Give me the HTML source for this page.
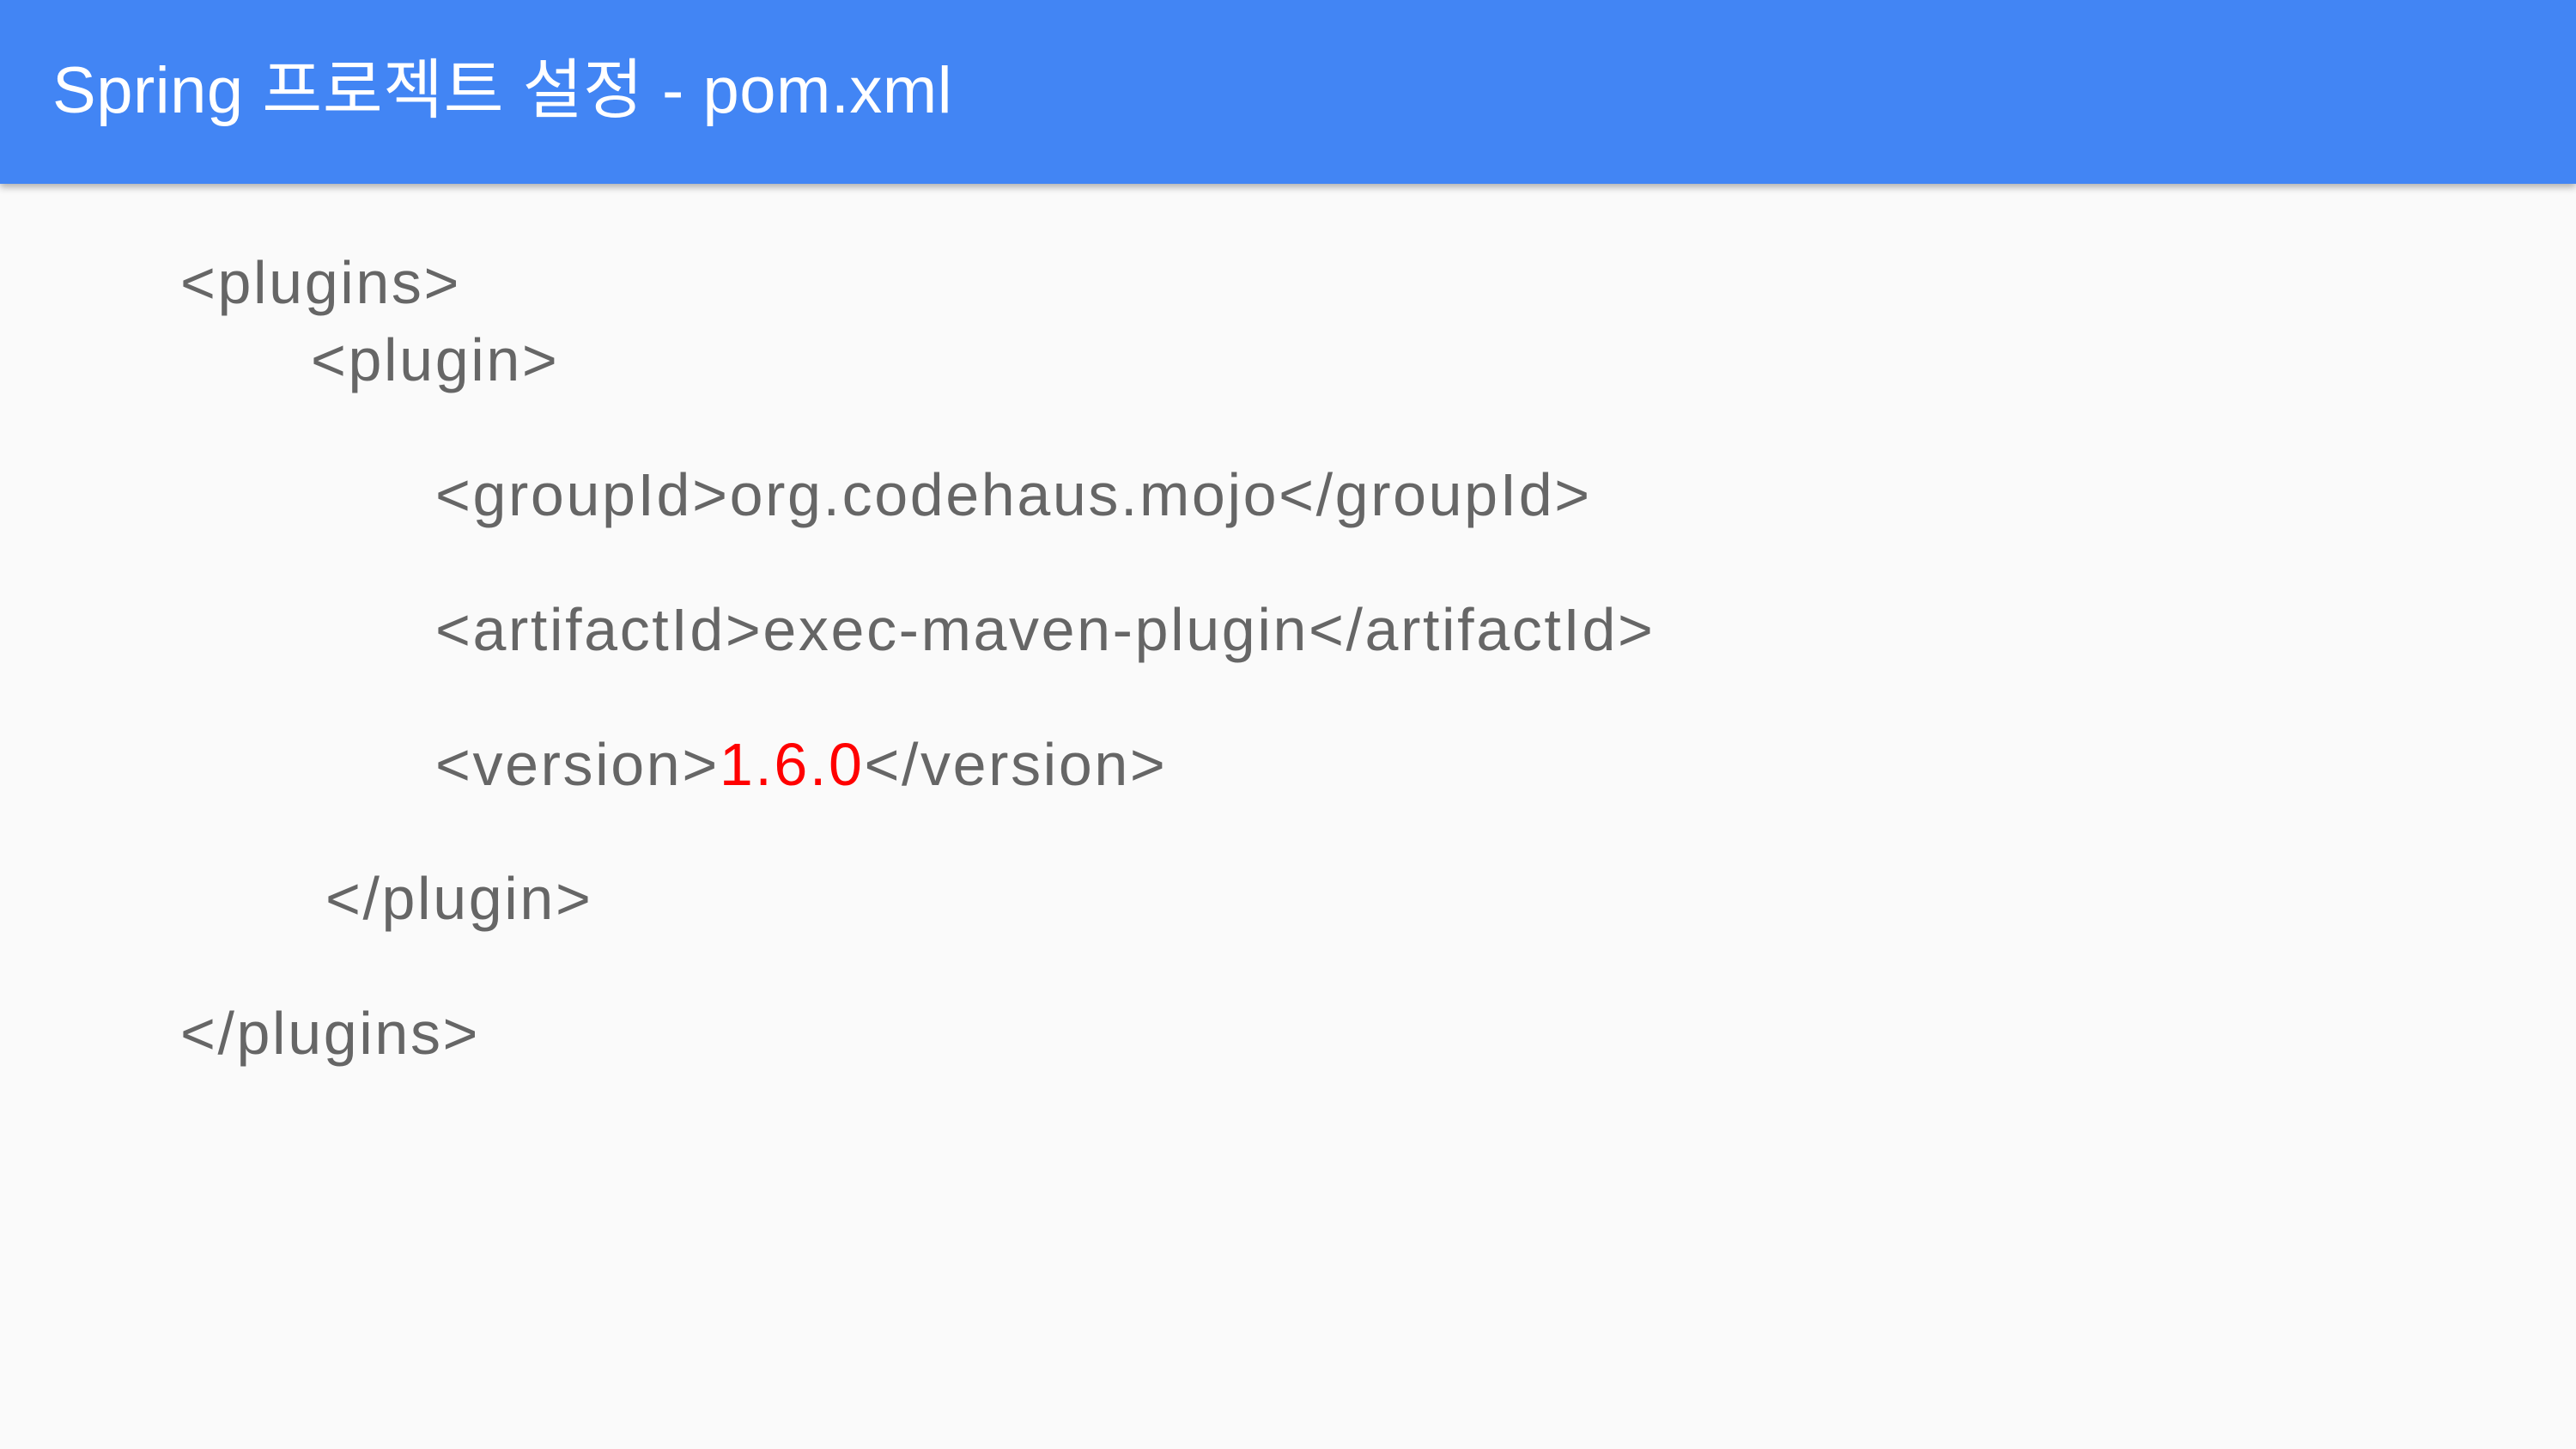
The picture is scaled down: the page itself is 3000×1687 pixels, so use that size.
<!DOCTYPE html>
<html><head><meta charset="utf-8">
<style>
html,body{margin:0;padding:0;}
body{width:3000px;height:1687px;background:#fafafa;position:relative;overflow:hidden;font-family:"Liberation Sans","Noto Sans CJK KR",sans-serif;}
.hdr{position:absolute;left:0;top:0;width:3000px;height:214px;background:#4285f4;box-shadow:0 4px 8px rgba(0,0,0,0.3);}
.title{position:absolute;left:61px;top:66px;font-size:76px;line-height:80px;color:#fff;white-space:nowrap;letter-spacing:0.5px;}
.l{position:absolute;font-size:70px;line-height:70px;color:#666;white-space:nowrap;letter-spacing:2.6px;}
.r{color:#f00;}
</style></head><body>
<div class="hdr"></div>
<div class="title">Spring 프로젝트 설정 - pom.xml</div>
<div class="l" style="left:210px;top:294px">&lt;plugins&gt;</div>
<div class="l" style="left:362px;top:384px">&lt;plugin&gt;</div>
<div class="l" style="left:507px;top:541px">&lt;groupId&gt;org.codehaus.mojo&lt;/groupId&gt;</div>
<div class="l" style="left:507px;top:698px">&lt;artifactId&gt;exec-maven-plugin&lt;/artifactId&gt;</div>
<div class="l" style="left:507px;top:855px">&lt;version&gt;<span class="r">1.6.0</span>&lt;/version&gt;</div>
<div class="l" style="left:379px;top:1011px">&lt;/plugin&gt;</div>
<div class="l" style="left:210px;top:1168px">&lt;/plugins&gt;</div>
</body></html>
